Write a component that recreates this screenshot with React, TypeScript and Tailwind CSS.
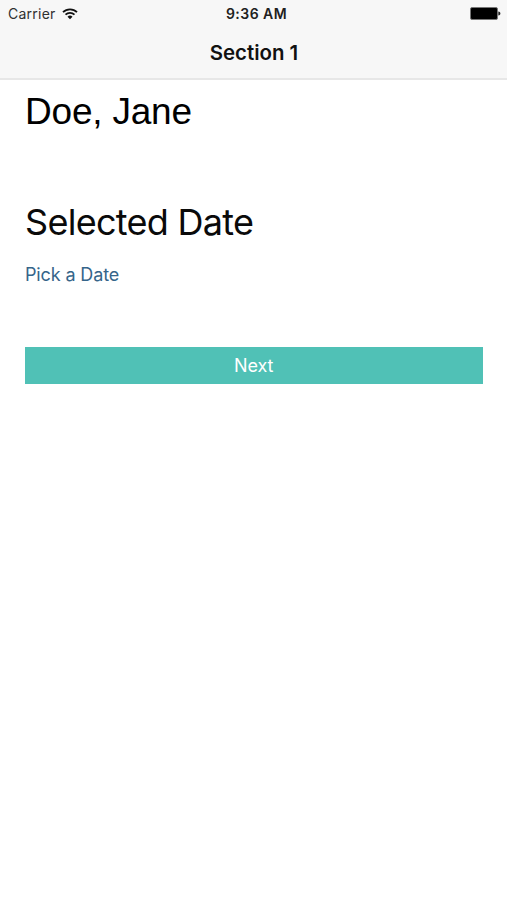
function WifiIcon() {
  return (
    <svg className="ml-[6px] h-[12px] w-[16px]" viewBox="0 0 16 12" fill="none">
      <path d="M1 4.200a9.900 9.900 0 0 1 14 0" stroke="#111" strokeWidth="1.8" />
      <path d="M3.5 6.700a6.400 6.400 0 0 1 9 0" stroke="#111" strokeWidth="1.7" />
      <path d="M8 11.300 5.500 8.800a3.500 3.500 0 0 1 5 0z" fill="#111" />
    </svg>
  );
}

function BatteryIcon() {
  return (
    <svg className="h-[13px] w-[31px]" viewBox="0 0 31 13">
      <rect x="0.5" y="0.5" width="27" height="12" rx="1.5" fill="#000" stroke="#777" strokeWidth="1" />
      <path d="M28.3 4.500c1.500.2 2.100 1 2.100 2s-.6 1.800-2.100 2z" fill="#222" />
    </svg>
  );
}

function StatusBar() {
  return (
    <div className="grid h-[27px] grid-cols-3 items-center pl-[8px] pr-[6px] text-[14px] leading-[27px]">
      <div className="flex items-center text-[#303030]">
        <span className="w-[48px] whitespace-nowrap tracking-[0.25px]">Carrier</span>
        <WifiIcon />
      </div>
      <div className="pl-[4px] text-center text-[14px] font-semibold tracking-[0.45px] text-[#202020]">9:36 AM</div>
      <div className="flex justify-end">
        <BatteryIcon />
      </div>
    </div>
  );
}

export default function App() {
  return (
    <div className="flex h-[900px] w-full flex-col bg-white font-['Inter','Liberation_Sans',sans-serif]">
      <header className="h-[80px] border-b-2 border-[#e7e7e7] bg-[#f7f7f7]">
        <StatusBar />
        <h1 className="pl-[1px] text-center text-[20.4px] font-semibold leading-[51px] text-[#111]">Section 1</h1>
      </header>
      <main className="flex flex-col px-[25px]">
        <h2 className="mt-[10px] font-['Liberation_Sans',sans-serif] text-[37px] leading-[44px] tracking-[-0.2px] text-black">
          Doe, Jane
        </h2>
        <h2 className="mt-[66px] text-[36px] leading-[44px] tracking-[-0.72px] text-[#0a0a0a]">Selected Date</h2>
        <a className="mt-[19px] text-[18px] leading-[24px] tracking-[-0.13px] text-[#35658a]">Pick a Date</a>
        <button className="mt-[60px] h-[36.500px] w-[457.500px] bg-[#50c1b6] text-[18px] leading-[37px] tracking-[-0.1px] text-white">
          Next
        </button>
      </main>
    </div>
  );
}
